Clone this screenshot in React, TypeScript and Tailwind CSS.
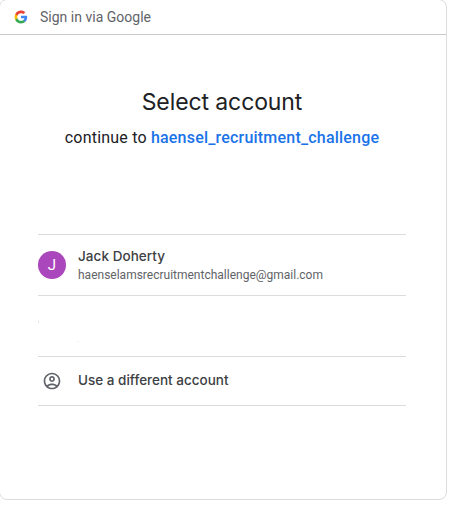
function GoogleLogo() {
  return (
    <svg className="size-[14px] shrink-0" viewBox="0 0 48 48" aria-hidden="true">
      <path fill="#4285F4" d="M45.12 24.5c0-1.56-.14-3.06-.4-4.5H24v8.51h11.84c-.51 2.75-2.06 5.08-4.39 6.64v5.52h7.11c4.16-3.83 6.56-9.47 6.56-16.17z" />
      <path fill="#34A853" d="M24 46c5.94 0 10.92-1.97 14.56-5.33l-7.11-5.52c-1.97 1.32-4.49 2.1-7.45 2.1-5.73 0-10.58-3.87-12.31-9.07H4.34v5.7C7.96 41.07 15.4 46 24 46z" />
      <path fill="#FBBC05" d="M11.69 28.18C11.25 26.86 11 25.45 11 24s.25-2.86.69-4.18v-5.7H4.34C2.85 17.09 2 20.45 2 24s.85 6.91 2.34 9.88l7.35-5.7z" />
      <path fill="#EA4335" d="M24 10.75c3.23 0 6.13 1.11 8.41 3.29l6.31-6.31C34.91 4.18 29.93 2 24 2 15.4 2 7.96 6.93 4.34 14.12l7.35 5.7c1.73-5.2 6.58-9.07 12.31-9.07z" />
    </svg>
  );
}

function AccountIcon() {
  return (
    <svg className="size-5" viewBox="0 0 24 24" fill="#5f6368" aria-hidden="true">
      <path d="M12 2C6.48 2 2 6.48 2 12s4.48 10 10 10 10-4.48 10-10S17.52 2 12 2zM7.35 18.5C8.66 17.56 10.26 17 12 17s3.34.56 4.65 1.5C15.34 19.44 13.74 20 12 20s-3.34-.56-4.65-1.5zm10.79-1.38C16.45 15.8 14.32 15 12 15s-4.45.8-6.14 2.12C4.7 15.73 4 13.95 4 12c0-4.42 3.58-8 8-8s8 3.58 8 8c0 1.95-.7 3.73-1.86 5.12z" />
      <path d="M12 6c-1.93 0-3.5 1.57-3.5 3.5S10.07 13 12 13s3.5-1.57 3.5-3.5S13.93 6 12 6zm0 5c-.83 0-1.5-.67-1.5-1.5S11.17 8 12 8s1.5.67 1.5 1.5S12.83 11 12 11z" />
    </svg>
  );
}

export default function App() {
  return (
    <div className="h-[508px] w-[456px] overflow-hidden bg-white font-['Roboto',sans-serif] text-[#202124]">
      <main className="-mt-px -ml-px flex h-[501px] w-[448px] flex-col rounded-lg border border-[#dadce0]">
        <header className="flex h-[35px] shrink-0 items-center border-b border-[#c8c8c8] pl-[14px]">
          <GoogleLogo />
          <span className="ml-3 text-sm leading-5 tracking-[0.01px] text-[#5f6368]">Sign in via Google</span>
        </header>
        <div className="flex flex-col pr-10 pl-[38px]">
          <h1 className="mt-[51px] text-center font-['Inter',sans-serif] text-[23px] leading-8 font-normal tracking-[-0.1px] whitespace-nowrap">Select account</h1>
          <p className="mt-2 text-center text-base leading-6 tracking-[0.2px] whitespace-nowrap">
            continue to <span className="font-medium text-[#1a73e8]">haensel_recruitment_challenge</span>
          </p>
          <ul className="mt-[84px]">
            <li className="flex h-[62px] items-center border-y border-[#dadce0]">
              <span className="flex size-7 items-center justify-center rounded-full bg-[#ab47bc] text-[15px] text-white">J</span>
              <div className="ml-3 flex flex-col">
                <span className="-mt-px mb-px font-['Inter',sans-serif] text-[13.5px] leading-[19px] font-medium tracking-[0.06px] text-[#3c4043]">Jack Doherty</span>
                <span className="text-xs leading-4 text-[#5f6368]">haenselamsrecruitmentchallenge@gmail.com</span>
              </div>
            </li>
            <li className="h-[61px] border-b border-[#dadce0] pt-[25px]">
              <div className="h-[2px] w-px bg-[#dedede]" />
              <div className="mt-[18px] ml-[39px] h-px w-[2px] bg-[#f3f3f3]" />
            </li>
            <li className="flex h-[49px] items-center border-b border-[#dadce0]">
              <span className="flex w-7 justify-center"><AccountIcon /></span>
              <span className="mb-[2px] ml-3 font-['Inter',sans-serif] text-[13.5px] leading-5 font-medium text-[#3c4043]">Use a different account</span>
            </li>
          </ul>
        </div>
      </main>
    </div>
  );
}
